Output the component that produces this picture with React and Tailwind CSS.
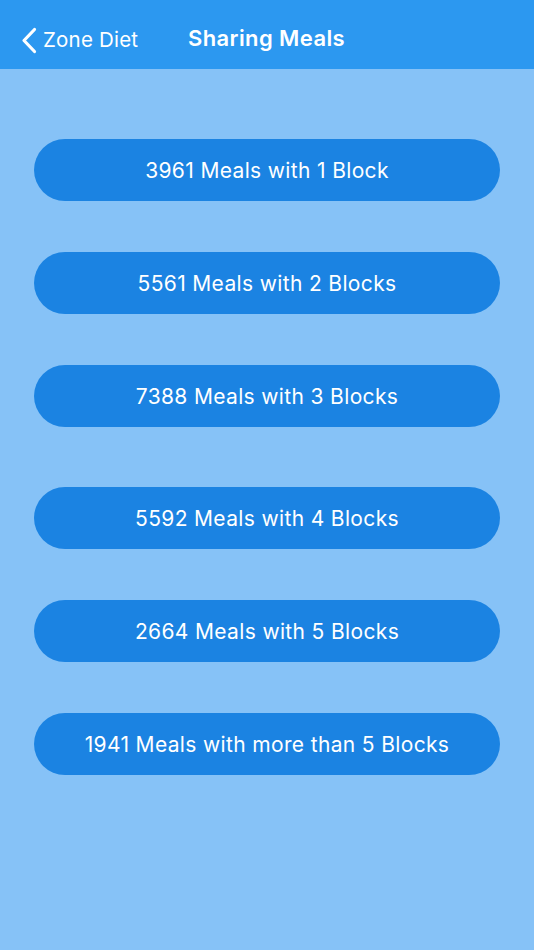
const MEALS = [
  { count: 3961, label: 'with 1 Block' },
  { count: 5561, label: 'with 2 Blocks' },
  { count: 7388, label: 'with 3 Blocks' },
  { count: 5592, label: 'with 4 Blocks', extra: true },
  { count: 2664, label: 'with 5 Blocks' },
  { count: 1941, label: 'with more than 5 Blocks' },
]

function BackChevron() {
  return (
    <svg width="18" height="27" viewBox="0 0 18 27" fill="none">
      <path d="M14.5 2.5 L4 13.5 L14.5 24.5" stroke="white" strokeWidth="3.2" strokeLinecap="round" strokeLinejoin="round" />
    </svg>
  )
}

export default function App() {
  return (
    <div className="w-[534px] h-[950px] bg-[#86c2f7] font-['Inter','Roboto',sans-serif] text-white">
      <div className="relative h-[69px] bg-[#2c98f0] flex items-center">
        <button className="flex items-center pl-[20px] gap-[5px] pt-[12px]">
          <BackChevron />
          <span className="text-[20.5px] leading-none tracking-[0.2px]">Zone Diet</span>
        </button>
        <h1 className="absolute left-[188px] top-[27px] text-[22px] font-semibold leading-none tracking-[0.4px]">Sharing Meals</h1>
      </div>

      <div className="flex flex-col px-[34px] pt-[70px]">
        {MEALS.map((m, i) => (
          <button
            key={m.count}
            className={`h-[62px] w-full rounded-full bg-[#1b83e2] pt-[2px] text-[21px] tracking-[0.35px] ${i === 0 ? '' : m.extra ? 'mt-[60px]' : 'mt-[51px]'}`}
          >
            {m.count} Meals {m.label}
          </button>
        ))}
      </div>
    </div>
  )
}
